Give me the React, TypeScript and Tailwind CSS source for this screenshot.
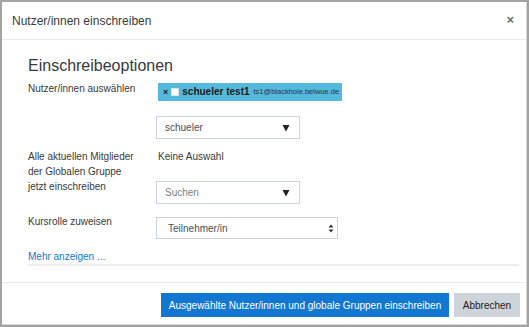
import React from "react";

function Caret() {
  return (
    <svg width="8" height="8" viewBox="0 0 8 8" className="shrink-0">
      <path d="M0.5 1 L7.5 1 L4 7.5 Z" fill="#222" />
    </svg>
  );
}

function UpDown() {
  return (
    <svg width="6" height="9" viewBox="0 0 6 9" className="shrink-0">
      <path d="M0.5 3.5 L3 0.5 L5.5 3.5 Z" fill="#333" />
      <path d="M0.5 5.5 L3 8.5 L5.5 5.5 Z" fill="#333" />
    </svg>
  );
}

export default function App() {
  return (
    <div className="w-[529px] h-[327px] bg-[#a3a3a3] pt-[2px] pl-[2px] overflow-hidden font-['Liberation_Sans',Arial,sans-serif] text-[#373a3c]">
      <div className="w-[525px] h-[323px] bg-white border-r border-b border-[#d6d6d6] flex flex-col">
        {/* header */}
        <div className="h-[38px] shrink-0 flex items-center justify-between pl-[10px] pr-[12px] border-b border-[#e9ecef]">
          <span className="text-[12px] leading-[14px]">Nutzer/innen einschreiben</span>
          <span className="text-[13px] font-bold text-[#6c6c6c] leading-none -mt-[2px]">×</span>
        </div>
        {/* body */}
        <div className="flex-1 pl-[26px] pr-[7px] pt-[16px]">
          <div className="text-[16px] leading-[19px]">Einschreibeoptionen</div>

          <div className="flex mt-[8px]">
            <div className="w-[128px] text-[10px] leading-[12px]">Nutzer/innen auswählen</div>
            <div className="ml-[2px] h-[18px] bg-[#54b9da] flex items-center pl-[5px] pr-[3px]">
              <span className="text-[9px] font-bold text-[#222] leading-none">×</span>
              <span className="ml-[3px] w-[8px] h-[8px] bg-white border border-[#e0e0e0]"></span>
              <span className="ml-[3px] text-[10px] font-bold text-[#1c1c1c] leading-none">schueler test1</span>
              <span className="ml-[4px] text-[7.5px] text-[#333] leading-none">ts1@blackhole.belwue.de</span>
            </div>
          </div>

          <div className="flex mt-[15px]">
            <div className="ml-[128px] w-[144px] h-[23px] border border-[#ced4da] flex items-center justify-between pl-[8px] pr-[9px]">
              <span className="text-[10px] text-[#495057]">schueler</span>
              <Caret />
            </div>
          </div>

          <div className="flex mt-[10px]">
            <div className="w-[128px] text-[10px] leading-[15px]">
              Alle aktuellen Mitglieder
              <br />
              der Globalen Gruppe
              <br />
              jetzt einschreiben
            </div>
            <div className="flex flex-col">
              <div className="ml-[2px] text-[10px] leading-[15px]">Keine Auswahl</div>
              <div className="mt-[17px] w-[144px] h-[23px] border border-[#ced4da] flex items-center justify-between pl-[8px] pr-[9px]">
                <span className="text-[10px] text-[#7b8288]">Suchen</span>
                <Caret />
              </div>
            </div>
          </div>

          <div className="flex items-start mt-[13px]">
            <div className="w-[128px] text-[10px] leading-[10px]">Kursrolle zuweisen</div>
            <div className="w-[182px] h-[22px] border border-[#ced4da] flex items-center justify-between pl-[11px] pr-[3px]">
              <span className="text-[10px] text-[#495057]">Teilnehmer/in</span>
              <UpDown />
            </div>
          </div>

          <div className="mt-[11px] text-[10px] leading-[14px] text-[#1177d1]">Mehr anzeigen ...</div>
          <div className="h-[2px] bg-[#eeeeee]"></div>
        </div>
        {/* footer */}
        <div className="h-[42px] shrink-0 border-t border-[#e9ecef] flex justify-end items-start pt-[10px] pr-[6px] gap-[5px]">
          <div className="w-[288px] h-[24px] bg-[#1177d1] text-white text-[10px] flex items-center justify-center">
            Ausgewählte Nutzer/innen und globale Gruppen einschreiben
          </div>
          <div className="w-[66px] h-[24px] bg-[#ced4da] text-[#1d2125] text-[10px] flex items-center justify-center">
            Abbrechen
          </div>
        </div>
      </div>
    </div>
  );
}
